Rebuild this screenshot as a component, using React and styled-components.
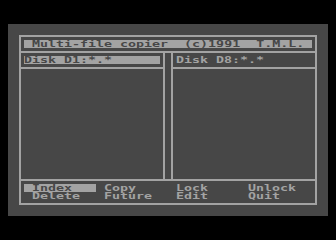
import React from "react";
import styled, { createGlobalStyle, css } from "styled-components";

const DARK = "#474747";
const LIGHT = "#a3a3a3";

const GlobalStyle = createGlobalStyle`
  html, body { margin: 0; padding: 0; background: #000; }
  body { font-family: "DejaVu Sans Mono", "Liberation Mono", monospace; }
`;

const Screen = styled.div`
  margin: 24px 0 0 8px;
  width: 320px;
  height: 192px;
  padding: 11px;
  box-sizing: border-box;
  background: ${DARK};
`;

const Frame = styled.div`
  height: 170px;
  box-sizing: border-box;
  border: 2px solid ${LIGHT};
  display: flex;
  flex-direction: column;
`;

const TitleSection = styled.div`
  padding: 3px;
  border-bottom: 2px solid ${LIGHT};
`;

const Bar = styled.div`
  display: flex;
  align-items: flex-start;
  height: 8px;
  line-height: 8px;
  ${(p) =>
    p.$inverse
      ? css`
          background: ${LIGHT};
          color: ${DARK};
        `
      : css`
          background: transparent;
          color: ${LIGHT};
        `}
  padding-left: ${(p) => (p.$indent || 0) * 8}px;
`;

const Glyphs = styled.span`
  display: block;
  height: 8px;
  line-height: 8px;
  font-size: 13.3px;
  font-weight: bold;
  white-space: pre;
  transform: scaleY(0.72);
  transform-origin: 50% 50%;
`;

const Panels = styled.div`
  flex: 1;
  display: flex;
`;

const Panel = styled.div`
  flex: 1;
  display: flex;
  flex-direction: column;
`;

const PanelHeader = styled.div`
  padding: 3px;
  border-bottom: 2px solid ${LIGHT};
`;

const FileList = styled.div`
  flex: 1;
`;

const Divider = styled.div`
  width: 6px;
  border-left: 2px solid ${LIGHT};
  border-right: 2px solid ${LIGHT};
`;

const Menu = styled.div`
  border-top: 2px solid ${LIGHT};
  padding: 3px;
  display: grid;
  grid-template-columns: repeat(4, 72px);
  grid-auto-rows: 8px;
`;

const Text = ({ children }) => <Glyphs>{children}</Glyphs>;

const menuItems = [
  ["Index", "Copy", "Lock", "Unlock"],
  ["Delete", "Future", "Edit", "Quit"],
];

export default function App() {
  return (
    <>
      <GlobalStyle />
      <Screen>
        <Frame>
          <TitleSection>
            <Bar $inverse $indent={1}>
              <Text>Multi-file copier  (c)1991  T.M.L.</Text>
            </Bar>
          </TitleSection>
          <Panels>
            <Panel>
              <PanelHeader>
                <Bar $inverse>
                  <Text>Disk D1:*.*</Text>
                </Bar>
              </PanelHeader>
              <FileList />
            </Panel>
            <Divider />
            <Panel>
              <PanelHeader>
                <Bar>
                  <Text>Disk D8:*.*</Text>
                </Bar>
              </PanelHeader>
              <FileList />
            </Panel>
          </Panels>
          <Menu>
            {menuItems.flat().map((label) => (
              <Bar key={label} $inverse={label === "Index"} $indent={1}>
                <Text>{label}</Text>
              </Bar>
            ))}
          </Menu>
        </Frame>
      </Screen>
    </>
  );
}
